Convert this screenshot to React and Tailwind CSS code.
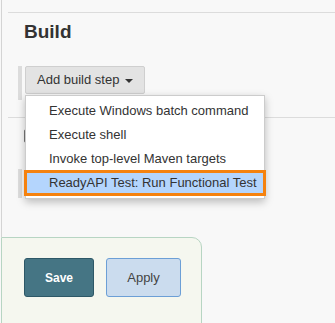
import React from 'react'

const items = [
  'Execute Windows batch command',
  'Execute shell',
  'Invoke top-level Maven targets',
]

export default function App() {
  return (
    <div className="relative h-[323px] w-[335px] overflow-hidden bg-[#f8f8f8] font-['Liberation_Sans',Arial,sans-serif] text-[#333]">
      {/* Build section */}
      <div className="ml-px h-[237px] border-l border-[#d4d4d4] pl-[6px] pt-3">
        <div className="border-t border-[#dcdcdc]">
          <h2 className="mt-[8px] pl-4 text-[19px] font-bold leading-[22px] text-[#333]">Build</h2>

          <div className="mt-[23px] flex pl-[10px]">
            <div className="h-[34px] w-[4px] bg-[#dcdcdc]" />
            <button className="ml-[3px] flex h-[28px] w-[120px] items-center rounded-[2px] border border-[#cfcfcf] bg-[#e3e3e3] pl-[11px] text-[13px] text-[#333]">
              Add build step
              <span className="ml-[6px] mt-px h-0 w-0 border-x-[4px] border-t-[4px] border-x-transparent border-t-[#333]" />
            </button>
          </div>

          <div className="mt-[17px] border-t border-[#dcdcdc]" />

          <div className="mt-[11px] pl-4">
            <div className="h-[14px] w-[14px] rounded-[2px] border border-[#777] bg-white" />
          </div>

          <div className="mt-[26px] flex pl-[10px]">
            <div className="h-[29px] w-[4px] bg-[#dcdcdc]" />
            <div className="ml-[3px] h-[29px] w-[159px] rounded-[2px] border border-[#cfcfcf] bg-[#e3e3e3]" />
          </div>
        </div>
      </div>

      {/* Bottom bar */}
      <div className="ml-[1px] h-[100px] w-[201px] rounded-tr-[10px] border border-[#b7d5c3] bg-[#f5f7ef] pl-[22px] pt-5">
        <div className="flex gap-3">
          <button className="h-[39px] w-[70px] rounded-[3px] border border-[#2d5867] bg-[#457584] text-[12px] font-bold text-white">
            Save
          </button>
          <button className="h-[39px] w-[75px] rounded-[3px] border border-[#6c9fd6] bg-[#cbdcee] text-[13px] text-[#444]">
            Apply
          </button>
        </div>
      </div>

      {/* Dropdown menu */}
      <div className="absolute left-[25px] top-[95px] w-[240px] border border-[#cccccc] bg-white pb-[2px] pt-[3px] shadow-[0_3px_8px_rgba(0,0,0,0.25)]">
        {items.map((t) => (
          <div key={t} className="h-6 pl-[23px] text-[13px] leading-6 text-[#333]">
            {t}
          </div>
        ))}
        <div className="-mx-[2px] -mt-px h-[26px] border-[3px] border-[#f5820f] bg-[#b4d5fd] pl-[22px] text-[13px] leading-5 text-[#333]">
          ReadyAPI Test: Run Functional Test
        </div>
      </div>
    </div>
  )
}
